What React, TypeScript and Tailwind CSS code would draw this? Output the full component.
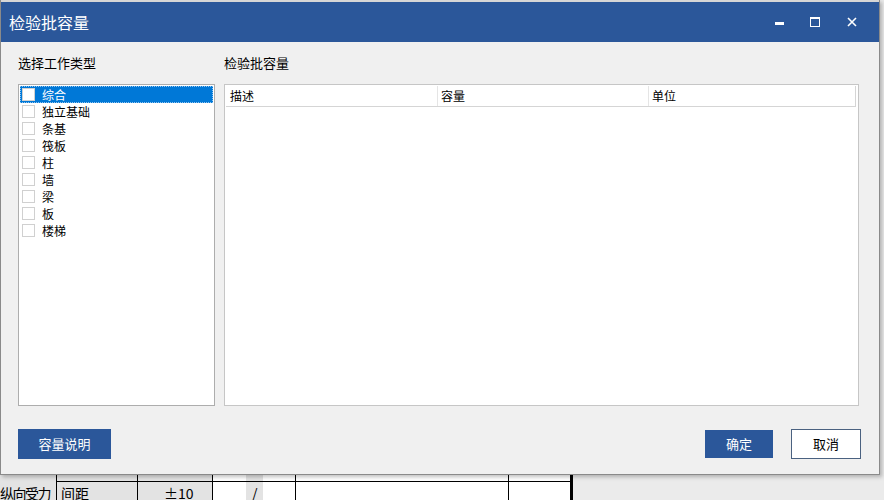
import { useState } from "react";

const FONT = { fontFamily: '"Microsoft YaHei", "Noto Sans CJK SC", "Noto Sans", sans-serif' };

const workTypes = ["综合", "独立基础", "条基", "筏板", "柱", "墙", "梁", "板", "楼梯"];

function SheetBehind() {
  // the spreadsheet peeking out underneath the dialog
  return (
    <div className="flex flex-col h-full">
      <div className="flex-1" />
      <div className="flex h-[40px] text-black">
        <div className="w-[57px] bg-[#e3e3e3] border-r border-black flex flex-col">
          <div className="h-[27px]" />
          <div className="text-[14px] leading-[14px] tracking-[-1.5px] whitespace-nowrap">纵向受力</div>
        </div>
        <div className="w-[516px] flex flex-col border-r-[3px] border-black">
          <div className="h-[26px] flex border-b border-black">
            <div className="w-[81px] bg-[#e3e3e3] border-r border-black" />
            <div className="w-[75px] bg-[#e3e3e3] border-r border-black" />
            <div className="w-[33px] bg-white" />
            <div className="w-[17px] bg-[#e3e3e3]" />
            <div className="w-[33px] bg-white border-r border-black" />
            <div className="w-[213px] bg-white border-r border-black" />
            <div className="flex-1 bg-white" />
          </div>
          <div className="flex-1 flex text-[14px] leading-[14px]">
            <div className="w-[81px] bg-[#e3e3e3] border-r border-black pl-[4px] pt-[4px]">间距</div>
            <div className="w-[75px] bg-[#e3e3e3] border-r border-black pl-[26px] pt-[4px]">±10</div>
            <div className="w-[33px] bg-white" />
            <div className="w-[17px] bg-[#e3e3e3] pl-[6px] pt-[4px]">/</div>
            <div className="w-[33px] bg-white border-r border-black" />
            <div className="w-[213px] bg-white border-r border-black" />
            <div className="flex-1 bg-white" />
          </div>
        </div>
        <div className="flex-1" />
      </div>
    </div>
  );
}

function Checkbox() {
  return <span className="w-[13px] h-[13px] border border-[#d0d0d0] bg-white shrink-0" />;
}

export default function App() {
  const [selected, setSelected] = useState(0);

  return (
    <div className="relative w-[884px] h-[500px] bg-[#ebebeb] overflow-hidden" style={FONT}>
      <SheetBehind />

      <div className="absolute left-0 top-0 w-[880px] h-[475px] flex flex-col bg-[#f0f0f0] border-l border-r border-b border-[#8a8a8a] shadow-[2px_2px_4px_rgba(0,0,0,0.25)]">
        <div className="h-[2px] bg-[#d6d6d6]" />
        <div className="h-[40px] bg-[#2b579a] flex items-center pl-[8px] text-white">
          <span className="text-[16px] leading-none">检验批容量</span>
          <div className="ml-auto flex items-center h-full">
            <div className="w-[36px] h-full flex items-center justify-center">
              <span className="w-[9px] h-[3px] bg-white mt-[3px]" />
            </div>
            <div className="w-[36px] h-full flex items-center justify-center">
              <span className="w-[10px] h-[10px] border border-white border-t-2" />
            </div>
            <div className="w-[38px] h-full flex items-center justify-center mr-[8px]">
              <svg width="10" height="10" viewBox="0 0 10 10">
                <path d="M1 1L9 9M9 1L1 9" stroke="white" strokeWidth="1.6" />
              </svg>
            </div>
          </div>
        </div>

        <div className="flex-1 flex flex-col pl-[17px] pr-[18px] pt-[13px]">
          <div className="flex gap-[9px] pr-[2px]">
            <div className="w-[197px] flex flex-col">
              <div className="h-[16px] text-[13px] leading-[16px] text-black">选择工作类型</div>
              <div className="mt-[13px] h-[322px] bg-white border border-[#adadad] p-[1px]">
                {workTypes.map((t, i) => (
                  <div
                    key={t}
                    onClick={() => setSelected(i)}
                    className={`h-[17px] flex items-center gap-[7px] pl-[2px] text-[12px] ${
                      i === selected
                        ? "bg-[#0078d7] text-white outline outline-1 outline-dotted outline-[#8fc4f0] -outline-offset-1"
                        : "text-black"
                    }`}
                  >
                    <Checkbox />
                    <span className="leading-none">{t}</span>
                  </div>
                ))}
              </div>
            </div>

            <div className="flex-1 flex flex-col">
              <div className="h-[16px] text-[13px] leading-[16px] text-black">检验批容量</div>
              <div className="mt-[13px] h-[322px] bg-white border border-[#c6c6c6] p-[1px]">
                <div className="flex h-[21px] border-b border-[#d5d5d5] mr-[1px] border-r text-[12px] text-black">
                  <div className="w-[212px] border-r border-[#e5e5e5] pl-[4px] flex items-center">描述</div>
                  <div className="w-[211px] border-r border-[#e5e5e5] pl-[3px] flex items-center">容量</div>
                  <div className="flex-1 pl-[3px] flex items-center">单位</div>
                </div>
              </div>
            </div>
          </div>

          <div className="flex items-center mt-[23px]">
            <button className="w-[93px] h-[30px] bg-[#2b579a] text-white text-[13px] border border-[#2b579a]">容量说明</button>
            <button className="ml-auto w-[68px] h-[28px] bg-[#2b579a] text-white text-[13px]">确定</button>
            <button className="ml-[18px] w-[70px] h-[30px] bg-white text-black text-[13px] border border-[#4a6180]">取消</button>
          </div>
        </div>
      </div>
    </div>
  );
}
